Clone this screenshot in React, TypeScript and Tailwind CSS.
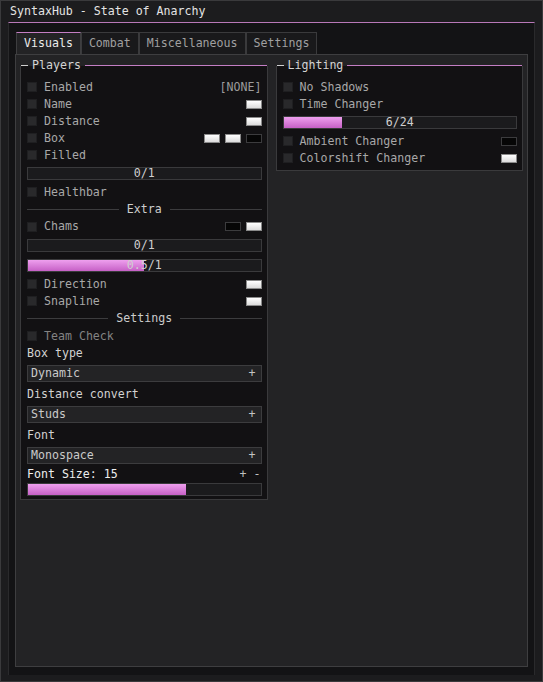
import React from "react";

const mono = "font-['DejaVu_Sans_Mono','Liberation_Mono',monospace] text-[11.6px] leading-none";

const Swatch = ({ dark }: { dark?: boolean }) => (
  <span
    className={`block w-[16px] h-[9px] border ${
      dark ? "bg-[#060606] border-[#3c3c3e]" : "bg-linear-to-b from-white to-[#dcdcdc] border-[#8a8a8a]"
    }`}
  />
);

const CheckRow = ({
  label,
  dim,
  right,
  h = "h-[17px]",
}: {
  label: string;
  dim?: boolean;
  right?: React.ReactNode;
  h?: string;
}) => (
  <div className={`flex ${h} items-center`}>
    <span className="w-[10px] h-[10px] shrink-0 bg-[#29292b] border border-[#1f1f21]" />
    <span className={`ml-[7px] pt-[1px] ${dim ? "text-[#838383]" : "text-[#a8a8a8]"}`}>{label}</span>
    <div className="ml-auto flex items-center gap-[5px]">{right}</div>
  </div>
);

const Slider = ({ value, text, className = "" }: { value: number; text?: string; className?: string }) => (
  <div className={`relative h-[13px] border border-[#3a3a3c] bg-[#1b1b1d] ${className}`}>
    <div className="h-full bg-linear-to-b from-[#ee9fee] to-[#c660c6]" style={{ width: `${value * 100}%` }} />
    {text && (
      <span className="absolute inset-0 flex items-center justify-center pt-[1px] text-[#cfcfcf]">{text}</span>
    )}
  </div>
);

const Separator = ({ label, h = "h-[17px]" }: { label: string; h?: string }) => (
  <div className={`flex ${h} items-center gap-[8px]`}>
    <span className="flex-1 h-px bg-[#3c3c3e]" />
    <span className="pt-[1px] text-[#cccccc]">{label}</span>
    <span className="flex-1 h-px bg-[#3c3c3e]" />
  </div>
);

const Dropdown = ({ value, className = "" }: { value: string; className?: string }) => (
  <div className={`flex h-[17px] items-center justify-between border border-[#3c3c3e] bg-[#232325] pl-[3px] pr-[5px] pt-[1px] ${className}`}>
    <span className="text-[#cacaca]">{value}</span>
    <span className="text-[#c4c4c4]">+</span>
  </div>
);

const Group = ({ title, children, className = "" }: { title: string; children: React.ReactNode; className?: string }) => (
  <div className={`flex flex-col border-x border-b border-[#3a3a3c] bg-[#121113] ${className}`}>
    <div className="-mt-[7px] flex h-[13px] items-center">
      <span className="w-[7px] h-px bg-[#cfcfcf]" />
      <span className="px-[4px] pt-[1px] text-[#d4d4d4]">{title}</span>
      <span className="flex-1 h-px bg-[#c47ec4]" />
    </div>
    <div className="flex flex-col pl-[6px] pr-[5px]">{children}</div>
  </div>
);

const tabs = ["Visuals", "Combat", "Miscellaneous", "Settings"];

export default function App() {
  return (
    <div className={`${mono} w-[543px] h-[682px] flex flex-col bg-[#1c1c1e] border border-[#3a3a3c]`}>
      <div className="flex h-[21px] items-center pl-[9px] pt-[1px] text-[#e4e4e4]">SyntaxHub - State of Anarchy</div>
      <div className="mx-[7px] mb-[6px] flex flex-1 flex-col border-t border-t-[#b878b8] border-x border-x-[#2a2a2c] bg-[#131315] pt-[9px] pl-[6px] pr-[6px] pb-[8px]">
        {/* tabs */}
        <div className="ml-[1px] flex h-[22px]">
          {tabs.map((t, i) => (
            <div
              key={t}
              className={`flex items-center px-[7px] pt-[1px] border-x ${
                i === 0
                  ? "bg-[#232325] border-t border-t-[#c47ec4] border-x-[#3e3e40] text-[#ececec]"
                  : "bg-[#19191b] border-t border-t-[#3a3a3c] border-x-[#3a3a3c] text-[#a0a0a0]"
              }`}
            >
              {t}
            </div>
          ))}
        </div>

        {/* panel */}
        <div className="flex-1 border border-[#3e3e40] bg-[#232325] px-[4px] pt-[11px]">
          <div className="grid grid-cols-2 items-start gap-[8px]">
            <Group title="Players">
              <div className="pt-[6.5px]" />
              <CheckRow label="Enabled" right={<span className="pt-[1px] text-[#9c9c9c]">[NONE]</span>} />
              <CheckRow label="Name" right={<Swatch />} />
              <CheckRow label="Distance" right={<Swatch />} />
              <CheckRow label="Box" right={<><Swatch /><Swatch /><Swatch dark /></>} />
              <CheckRow label="Filled" />
              <Slider value={0} text="0/1" className="my-[3.5px]" />
              <CheckRow label="Healthbar" />
              <Separator label="Extra" />
              <CheckRow label="Chams" h="h-[18px]" right={<><Swatch dark /><Swatch /></>} />
              <Slider value={0} text="0/1" className="mt-[3.5px]" />
              <Slider value={0.5} text="0.5/1" className="mt-[7px]" />
              <div className="pt-[3.5px]" />
              <CheckRow label="Direction" right={<Swatch />} />
              <CheckRow label="Snapline" right={<Swatch />} />
              <Separator label="Settings" h="h-[18px]" />
              <CheckRow label="Team Check" dim />
              <div className="flex h-[18px] items-center pt-[1px] text-[#d2d2d2]">Box type</div>
              <Dropdown value="Dynamic" className="mt-[2px] mb-[4px]" />
              <div className="flex h-[18px] items-center pt-[1px] text-[#d2d2d2]">Distance convert</div>
              <Dropdown value="Studs" className="mt-[2px] mb-[4px]" />
              <div className="flex h-[18px] items-center pt-[1px] text-[#d2d2d2]">Font</div>
              <Dropdown value="Monospace" className="mt-[2px] mb-[2px]" />
              <div className="flex h-[17px] items-center justify-between pt-[1px] text-[#eeeeee]">
                <span>Font Size: 15</span>
                <span className="pr-[1px] text-[#c0c0c0]">+ -</span>
              </div>
              <Slider value={0.68} className="mb-[3px]" />
            </Group>

            <Group title="Lighting">
              <div className="pt-[6.5px]" />
              <CheckRow label="No Shadows" />
              <CheckRow label="Time Changer" />
              <Slider value={0.25} text="6/24" className="my-[3.5px]" />
              <CheckRow label="Ambient Changer" right={<Swatch dark />} />
              <CheckRow label="Colorshift Changer" right={<Swatch />} />
              <div className="pb-[3px]" />
            </Group>
          </div>
        </div>
      </div>
    </div>
  );
}
